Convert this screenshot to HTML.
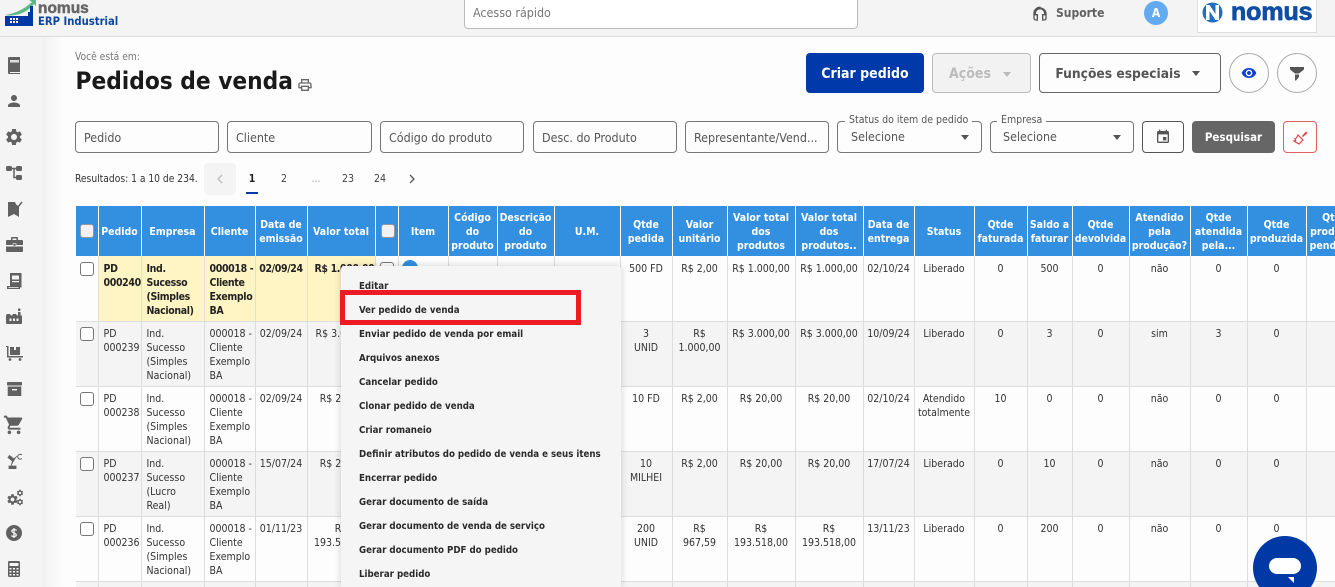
<!DOCTYPE html>
<html lang="pt-BR"><head><meta charset="utf-8"><title>Pedidos de venda</title>
<style>
html,body{margin:0;padding:0;width:1335px;height:587px;overflow:hidden;background:#fdfdfd}
body{position:relative;font-family:"DejaVu Sans Condensed","DejaVu Sans","Liberation Sans",sans-serif;font-size:10.5px;color:#333}
.a{position:absolute;white-space:nowrap}
svg{position:absolute;display:block}
#top{left:0;top:0;width:1335px;height:36px;background:#f4f4f4;border-bottom:1px solid #ddd}
#side{left:0;top:37px;width:42px;height:550px;background:#f4f4f4}
#shade{left:42px;top:37px;width:22px;height:550px;background:linear-gradient(90deg,#f1f1f1,#fdfdfd)}
.btn{position:absolute;box-sizing:border-box;top:53px;height:40px;border-radius:4px;font-weight:bold;font-size:14px;display:flex;align-items:center;justify-content:center;padding-top:1px}
.inp{position:absolute;box-sizing:border-box;top:121px;height:32px;border:1px solid #777;border-radius:4px;background:#fdfdfd;font-size:12.4px;color:#555;line-height:32px;padding-left:8px;white-space:nowrap;overflow:hidden}
.flab{position:absolute;top:114px;background:#fdfdfd;padding:0 4px;font-size:10.5px;color:#555;line-height:13px;white-space:nowrap}
.caret{position:absolute;width:0;height:0;border-left:4px solid transparent;border-right:4px solid transparent;border-top:5px solid #555}
.pg{position:absolute;top:172px;font-size:10.5px;color:#444;width:24px;text-align:center;line-height:14px}
#wrap{left:76px;top:206px;width:1259px;height:381px;overflow:hidden;white-space:normal}
table{border-collapse:separate;border-spacing:0;table-layout:fixed;width:1288px;position:absolute;left:0;top:0}
th{background:#3390e0;color:#fff;font-weight:bold;height:50px;padding:2px 1px 0;box-sizing:border-box;border-right:1px solid #fff;line-height:14px;font-size:10.5px;text-align:center;vertical-align:middle;overflow:hidden;white-space:normal}
td{box-sizing:border-box;height:65px;padding:6px 1px 0;line-height:14px;vertical-align:top;text-align:center;border-right:1px solid #ddd;border-bottom:1px solid #ddd;color:#333;overflow:hidden;background:#fdfdfd;white-space:normal}
tr:not(.s) td:not(.c0){padding-top:5px}
tr.e td{background:#f4f4f4}
tr.s td{height:66px}
tr.s td.y{background:#fff5c4;font-weight:bold;color:#222;letter-spacing:-.35px}
td.l{text-align:left;padding-left:5px;padding-right:0}
.cb{display:block;box-sizing:border-box;width:14px;height:14px;border:1px solid #777;border-radius:3px;background:#fff;margin:0;position:relative;top:5px;left:4px}
tr.s .cb{top:6px}
th .cb{background:#f2f2f2;border-color:#999;top:-1px;margin:0 0 0 3px;left:0}
td.c0{padding:0}
#menu{left:341px;top:266px;width:280px;height:321px;background:#f5f5f5;box-shadow:0 0 8px rgba(0,0,0,.18);border-radius:3px 3px 0 0}
.mi{position:absolute;left:359px;font-weight:bold;font-size:9.65px;color:#2a2a2a;line-height:14px;white-space:nowrap}
#red{left:340px;top:290px;width:241px;height:35px;box-sizing:border-box;border:5px solid #ed1c24}
</style></head><body>

<div class="a" id="top"></div>
<div class="a" id="side"></div>
<div class="a" id="shade"></div>

<!-- Logo left -->
<svg style="left:4px;top:0" width="32" height="28" viewBox="0 0 32 28">
<path d="M1 15 Q16 13 28 2 L25 0 L32 0 L32 6 L30 4 Q20 16 4 15.500Z" fill="#5cb885"/>
<path d="M1 16H24V12L26 12V6H29V16H29V26H1Z" fill="#0039a6"/>
<g fill="#fff"><rect x="6" y="18" width="2" height="2"/><rect x="9" y="18" width="2" height="2"/><rect x="12" y="18" width="2" height="2"/><rect x="6" y="21" width="2" height="2"/><rect x="9" y="21" width="2" height="2"/><rect x="12" y="21" width="2" height="2"/></g>
</svg>
<div class="a" style="left:38px;top:1px;font-family:'Liberation Sans',sans-serif;font-weight:bold;font-size:15.5px;line-height:16px;color:#666;-webkit-text-stroke:.5px #666">nomus</div>
<div class="a" style="left:38px;top:14px;font-weight:bold;font-size:11.2px;line-height:15px;color:#0d47a1">ERP Industrial</div>

<!-- search -->
<div class="a" style="left:464px;top:-2px;width:394px;height:31px;box-sizing:border-box;background:#fff;border:1px solid #bbb;border-radius:0 0 4px 4px;font-size:12.4px;color:#777;line-height:28px;padding-left:8px">Acesso rápido</div>

<!-- support -->
<svg style="left:1032px;top:6px" width="16" height="16" viewBox="0 0 24 24"><path d="M12 2a9 9 0 0 0-9 9v7a3 3 0 0 0 3 3h2v-8H5v-2a7 7 0 0 1 14 0v2h-3v8h2.500a3 3 0 0 0 2.500-2v-7a9 9 0 0 0-9-9z" fill="none" stroke="#555" stroke-width="2"/></svg>
<div class="a" style="left:1056px;top:6px;font-weight:bold;font-size:12px;line-height:15px;color:#616161">Suporte</div>
<div class="a" style="left:1144px;top:1px;width:24px;height:24px;border-radius:50%;background:#64aaf0;color:#fff;font-weight:bold;font-size:12px;line-height:24px;text-align:center">A</div>
<div class="a" style="left:1197px;top:-2px;width:120px;height:35px;box-sizing:border-box;background:#fff;border:1px solid #ddd"></div>
<svg style="left:1202px;top:2px" width="21" height="21" viewBox="0 0 21 21"><circle cx="10.500" cy="10.500" r="10" fill="#1f6fc0"/><path d="M4 18V3h3.500l6 9V3H17v15h-3.500l-6-9v9z" fill="#fff"/></svg>
<div class="a" style="left:1231px;top:-2px;font-family:'Liberation Sans',sans-serif;font-weight:bold;font-size:25px;line-height:28px;color:#0f4ea3;-webkit-text-stroke:.8px #0f4ea3;letter-spacing:-.1px">nomus</div>

<!-- sidebar icons -->
<svg style="left:8px;top:57px" width="13" height="17" viewBox="0 0 13 17"><path d="M1 0h11v15H2a1 1 0 0 0 0 1h10v1H1a1 1 0 0 1-1-1V1a1 1 0 0 1 1-1z" fill="#616161"/><rect x="2" y="3" width="9" height="2.500" fill="#ddd"/></svg>
<svg style="left:5px;top:92px" width="18" height="18" viewBox="0 0 24 24"><path d="M12 12c2.210 0 4-1.790 4-4s-1.790-4-4-4-4 1.790-4 4 1.790 4 4 4zm0 2c-2.670 0-8 1.340-8 4v2h16v-2c0-2.660-5.330-4-8-4z" fill="#616161"/></svg>
<svg style="left:4px;top:127px" width="20" height="20" viewBox="0 0 24 24"><path id="g" d="M19.140 12.940c.04-.3.06-.61.06-.94 0-.32-.02-.64-.07-.94l2.030-1.580c.18-.14.23-.41.12-.61l-1.920-3.320c-.12-.22-.37-.29-.59-.22l-2.390.96c-.5-.38-1.030-.7-1.620-.94l-.36-2.540c-.04-.24-.24-.41-.48-.41h-3.840c-.24 0-.43.17-.47.41l-.36 2.540c-.59.24-1.130.57-1.620.94l-2.390-.96c-.22-.08-.47 0-.59.22L2.740 8.870c-.12.21-.08.47.12.61l2.030 1.580c-.05.3-.09.63-.09.94s.02.64.07.94l-2.030 1.580c-.18.14-.23.41-.12.61l1.920 3.320c.12.22.37.29.59.22l2.390-.96c.5.38 1.030.7 1.620.94l.36 2.540c.05.24.24.41.48.41h3.840c.24 0 .44-.17.47-.41l.36-2.540c.59-.24 1.130-.56 1.620-.94l2.390.96c.22.08.47 0 .59-.22l1.920-3.320c.12-.22.07-.47-.12-.61l-2.010-1.580zM12 15.600c-1.980 0-3.600-1.620-3.600-3.600s1.620-3.600 3.600-3.600 3.600 1.620 3.600 3.600-1.620 3.600-3.600 3.600z" fill="#616161"/></svg>
<svg style="left:6px;top:165px" width="16" height="16" viewBox="0 0 16 16"><g fill="#616161"><rect x="0" y="1" width="6" height="5" rx="1.500"/><rect x="10" y="1" width="6" height="5" rx="1.500"/><rect x="10" y="10" width="6" height="5" rx="1.500"/></g><path d="M5 3.500h6M8 3.500v9h3" stroke="#616161" stroke-width="1.500" fill="none"/></svg>
<svg style="left:8px;top:201px" width="15" height="17" viewBox="0 0 15 17"><path d="M0 1h7l2 5h2v10l-5-3-6 3z" fill="#616161"/><path d="M8 4l2 2 4-5" stroke="#616161" stroke-width="1.500" fill="none"/></svg>
<svg style="left:6px;top:236px" width="17" height="17" viewBox="0 0 17 17"><path d="M5 4V2a1 1 0 0 1 1-1h5a1 1 0 0 1 1 1v2h4a1 1 0 0 1 1 1v4H0V5a1 1 0 0 1 1-1zm1.500 0h4V2.500h-4zM0 10.500h17V15a1 1 0 0 1-1 1H1a1 1 0 0 1-1-1z" fill="#616161"/><rect x="7" y="7.500" width="3" height="2.500" fill="#616161" stroke="#f4f4f4" stroke-width=".6"/></svg>
<svg style="left:7px;top:273px" width="15" height="17" viewBox="0 0 15 17"><path d="M3 0h11.500v14.500H13V16H0v-3h3z" fill="#616161"/><rect x="5" y="2.500" width="7" height="4" fill="#f4f4f4"/><rect x="5" y="8" width="7" height="1.200" fill="#f4f4f4"/><rect x="1.500" y="14" width="10" height=".8" fill="#f4f4f4"/></svg>
<svg style="left:6px;top:308px" width="16" height="17" viewBox="0 0 16 17"><path d="M0 7.500L1 6h3l1 1.500h1L7 6h3l1 1.500h1V4h2.500v3.500H16V15a1 1 0 0 1-1 1H1a1 1 0 0 1-1-1z" fill="#616161"/><circle cx="13.200" cy="1.700" r="1.300" fill="#616161"/><g fill="#f4f4f4"><rect x="3.500" y="10.500" width="2" height="2.500"/><rect x="7" y="10.500" width="2" height="2.500"/><rect x="10.500" y="10.500" width="2" height="2.500"/></g></svg>
<svg style="left:6px;top:345px" width="17" height="16" viewBox="0 0 17 16"><path d="M0 1h2.500v10H17v1.500H1V2H0z" fill="#616161"/><path d="M4 2h4v3h2V2h4v8H4z" fill="#616161"/><circle cx="4" cy="14.500" r="1.400" fill="#616161"/><circle cx="14" cy="14.500" r="1.400" fill="#616161"/></svg>
<svg style="left:7px;top:382px" width="15" height="14" viewBox="0 0 15 14"><rect x="0" y="0" width="15" height="3.500" rx=".8" fill="#616161"/><path d="M.7 4.500h13.600V14H.7z" fill="#616161"/><rect x="5" y="7" width="5" height="1.400" fill="#f4f4f4"/></svg>
<svg style="left:3px;top:414px" width="22" height="22" viewBox="0 0 24 24"><path d="M7 18c-1.100 0-1.990.9-1.990 2S5.900 22 7 22s2-.9 2-2-.9-2-2-2zM1 2v2h2l3.600 7.590-1.350 2.450c-.16.28-.25.61-.25.96 0 1.100.9 2 2 2h12v-2H7.420c-.14 0-.25-.11-.25-.25l.03-.12.9-1.830h7.450c.75 0 1.410-.41 1.750-1.030l3.580-6.490c.08-.14.12-.31.12-.48 0-.55-.45-1-1-1H5.210l-.94-2H1zm16 16c-1.100 0-1.990.9-1.990 2s.89 2 1.990 2 2-.9 2-2-.9-2-2-2z" fill="#616161"/></svg>
<svg style="left:7px;top:453px" width="15" height="16" viewBox="0 0 15 16"><path d="M2 13h7v3H2zM4 13l1.500-5L1 4.500 2.500 2.500 7 6 10 3" fill="#616161" stroke="#616161" stroke-width=".8"/><path d="M15 2a2.500 2.500 0 1 0 0 3.500" stroke="#616161" stroke-width="1" fill="none"/></svg>
<svg style="left:6px;top:493px" width="13" height="13" viewBox="0 0 24 24"><use href="#g"/></svg>
<svg style="left:16px;top:489px" width="8" height="8" viewBox="0 0 24 24"><use href="#g"/></svg>
<svg style="left:16px;top:498px" width="8" height="8" viewBox="0 0 24 24"><use href="#g"/></svg>
<svg style="left:6px;top:525px" width="16" height="16" viewBox="0 0 16 16"><circle cx="8" cy="8" r="8" fill="#616161"/><path d="M10.500 5.500C10 4.500 6 4 5.800 6s4.500 2 4.500 4-4 1.800-4.800.5M8 3v10" fill="none" stroke="#f4f4f4" stroke-width="1.300"/></svg>
<svg style="left:8px;top:561px" width="12" height="16" viewBox="0 0 12 16"><rect width="12" height="16" rx="1.200" fill="#616161"/><rect x="1.500" y="2" width="9" height="3" fill="#f4f4f4"/><g fill="#f4f4f4"><rect x="1.500" y="7" width="2" height="1.500"/><rect x="5" y="7" width="2" height="1.500"/><rect x="8.500" y="7" width="2" height="1.500"/><rect x="1.500" y="10" width="2" height="1.500"/><rect x="5" y="10" width="2" height="1.500"/><rect x="8.500" y="10" width="2" height="1.500"/><rect x="1.500" y="13" width="2" height="1.500"/><rect x="5" y="13" width="2" height="1.500"/><rect x="8.500" y="13" width="2" height="1.500"/></g></svg>

<!-- heading -->
<div class="a" style="left:75px;top:51px;font-size:10.2px;line-height:13px;color:#777">Você está em:</div>
<div class="a" style="left:75.5px;top:64px;font-weight:bold;font-size:24.2px;line-height:34px;color:#1a1a1a">Pedidos de venda</div>
<svg style="left:297px;top:77px" width="16" height="16" viewBox="0 0 24 24"><path d="M19 8h-1V3H6v5H5c-1.660 0-3 1.340-3 3v6h4v4h12v-4h4v-6c0-1.660-1.340-3-3-3zM8 5h8v3H8V5zm8 14H8v-4h8v4zm4-4h-2v-2H6v2H4v-4c0-.55.45-1 1-1h14c.55 0 1 .45 1 1v4z" fill="#666"/></svg>

<!-- top buttons -->
<div class="btn" style="left:806px;width:118px;background:#0039a9;color:#fff">Criar pedido</div>
<div class="btn" style="left:932px;width:99px;background:#f2f2f2;border:1px solid #bbb;color:#bbb"><span style="margin-right:23px">Ações</span></div>
<div class="caret" style="left:1003px;top:72px;border-top-color:#bbb"></div>
<div class="btn" style="left:1039px;width:182px;background:#fdfdfd;border:1px solid #666;color:#555;font-size:13.7px"><span style="margin-right:24px">Funções especiais</span></div>
<div class="caret" style="left:1192px;top:71px"></div>
<div class="btn" style="left:1229px;width:40px;border:1px solid #aaa;border-radius:50%"></div>
<svg style="left:1241px;top:65px" width="16" height="16" viewBox="0 0 24 24"><path d="M12 4.500C7 4.500 2.730 7.610 1 12c1.730 4.390 6 7.500 11 7.500s9.270-3.110 11-7.500c-1.730-4.390-6-7.500-11-7.500zM12 17c-2.760 0-5-2.240-5-5s2.240-5 5-5 5 2.240 5 5-2.240 5-5 5zm0-8c-1.660 0-3 1.340-3 3s1.340 3 3 3 3-1.340 3-3-1.340-3-3-3z" fill="#0a3fd0"/></svg>
<div class="btn" style="left:1277px;width:40px;border:1px solid #aaa;border-radius:50%"></div>
<svg style="left:1290px;top:67px" width="14" height="14" viewBox="0 0 14 14"><path d="M0 0h14v2.500L9 6.500H5L0 2.500zM5 7.500h4V10l-3 3.500H5z" fill="#555"/></svg>

<!-- filters -->
<div class="inp" style="left:75px;width:144px">Pedido</div>
<div class="inp" style="left:227px;width:145px">Cliente</div>
<div class="inp" style="left:380px;width:144px">Código do produto</div>
<div class="inp" style="left:533px;width:144px">Desc. do Produto</div>
<div class="inp" style="left:685px;width:144px">Representante/Vend...</div>
<div class="inp" style="left:837px;width:145px;padding-left:13px;line-height:30px">Selecione</div>
<div class="flab" style="left:845px">Status do item de pedido</div>
<div class="caret" style="left:961px;top:135px"></div>
<div class="inp" style="left:990px;width:144px;padding-left:12px;line-height:30px">Selecione</div>
<div class="flab" style="left:997px">Empresa</div>
<div class="caret" style="left:1113px;top:135px"></div>
<div class="inp" style="left:1142px;width:42px;border-color:#555"></div>
<svg style="left:1155px;top:129px" width="16" height="16" viewBox="0 0 24 24"><path d="M17 12h-5v5h5v-5zM16 1v2H8V1H6v2H5c-1.110 0-1.990.9-1.990 2L3 19c0 1.100.89 2 2 2h14c1.100 0 2-.9 2-2V5c0-1.100-.9-2-2-2h-1V1h-2zm3 18H5V8h14v11z" fill="#555"/></svg>
<div class="a" style="left:1192px;top:121px;width:83px;height:32px;background:#666;border-radius:4px;color:#fff;font-weight:bold;font-size:11.500px;line-height:33px;text-align:center">Pesquisar</div>
<div class="a" style="left:1283px;top:121px;width:34px;height:32px;box-sizing:border-box;border:1px solid #e06060;border-radius:4px"></div>
<svg style="left:1293px;top:130px" width="15" height="15" viewBox="0 0 15 15"><path d="M9 6l4-4.500 1.500 1.500L10 7z" fill="#e04040"/><path d="M5 5l5 5-4 4L1 11c2 0 2-1 1-2 1 0 2-2 3-4z" fill="none" stroke="#e04040" stroke-width="1.200"/></svg>

<!-- pagination -->
<div class="a" style="left:75px;top:173px;font-size:10.2px;line-height:14px;color:#333">Resultados: 1 a 10 de 234.</div>
<div class="a" style="left:204px;top:163px;width:32px;height:32px;background:#f4f4f4;border-radius:4px"></div>
<svg style="left:216px;top:174px" width="8" height="10" viewBox="0 0 8 10"><path d="M6 1L2 5l4 4" fill="none" stroke="#bbb" stroke-width="1.300"/></svg>
<div class="pg" style="left:240px;font-weight:bold;color:#222">1</div>
<div class="a" style="left:246px;top:192px;width:12px;height:2px;background:#0039a9"></div>
<div class="pg" style="left:272px">2</div>
<div class="pg" style="left:304px;color:#aaa">...</div>
<div class="pg" style="left:336px">23</div>
<div class="pg" style="left:368px">24</div>
<svg style="left:408px;top:174px" width="8" height="10" viewBox="0 0 8 10"><path d="M2 1l4 4-4 4" fill="none" stroke="#555" stroke-width="1.300"/></svg>

<!-- table -->
<div class="a" id="wrap">
<table>
<colgroup><col style="width:22.500px"><col style="width:43px"><col style="width:63px"><col style="width:51px"><col style="width:52px"><col style="width:68px"><col style="width:23px"><col style="width:50px"><col style="width:49px"><col style="width:57px"><col style="width:66px"><col style="width:52px"><col style="width:55px"><col style="width:68px"><col style="width:68px"><col style="width:51px"><col style="width:60px"><col style="width:53px"><col style="width:45px"><col style="width:57px"><col style="width:61px"><col style="width:57px"><col style="width:59px"><col style="width:58px"></colgroup>
<tr><th><span class="cb"></span></th><th>Pedido</th><th>Empresa</th><th>Cliente</th><th>Data de emissão</th><th>Valor total</th><th><span class="cb" style="margin-left:4px"></span></th><th>Item</th><th>Código do produto</th><th>Descrição do produto</th><th>U.M.</th><th>Qtde pedida</th><th>Valor unitário</th><th>Valor total dos produtos</th><th>Valor total dos produtos..</th><th>Data de entrega</th><th>Status</th><th>Qtde faturada</th><th>Saldo a faturar</th><th>Qtde devolvida</th><th>Atendido pela produção?</th><th>Qtde atendida pela...</th><th>Qtde produzida</th><th>Qtde produção pendente</th></tr>
<tr class="s"><td class="c0"><span class="cb"></span></td><td class="l y">PD<br>000240</td><td class="l y">Ind.<br>Sucesso<br>(Simples<br>Nacional)</td><td class="l y">000018&nbsp;-<br>Cliente<br>Exemplo<br>BA</td><td class="y">02/09/24</td><td class="y" style="text-align:left;padding-left:7px;white-space:nowrap">R$&nbsp;1.000,00</td><td class="c0"><span class="cb"></span></td><td></td><td></td><td></td><td></td><td>500 FD</td><td>R$ 2,00</td><td>R$ 1.000,00</td><td>R$ 1.000,00</td><td>02/10/24</td><td>Liberado</td><td>0</td><td>500</td><td>0</td><td>não</td><td>0</td><td>0</td><td></td></tr>
<tr class="e"><td class="c0"><span class="cb"></span></td><td class="l">PD<br>000239</td><td class="l">Ind.<br>Sucesso<br>(Simples<br>Nacional)</td><td class="l">000018&nbsp;-<br>Cliente<br>Exemplo<br>BA</td><td>02/09/24</td><td style="text-align:left;padding-left:8px;white-space:nowrap">R$ 3.000,00</td><td class="c0"></td><td></td><td></td><td></td><td></td><td>3<br>UNID</td><td>R$ 1.000,00</td><td>R$ 3.000,00</td><td>R$ 3.000,00</td><td>10/09/24</td><td>Liberado</td><td>0</td><td>3</td><td>0</td><td>sim</td><td>3</td><td>0</td><td></td></tr>
<tr><td class="c0"><span class="cb"></span></td><td class="l">PD<br>000238</td><td class="l">Ind.<br>Sucesso<br>(Simples<br>Nacional)</td><td class="l">000018&nbsp;-<br>Cliente<br>Exemplo<br>BA</td><td>02/09/24</td><td>R$ 20,00</td><td class="c0"></td><td></td><td></td><td></td><td></td><td>10 FD</td><td>R$ 2,00</td><td>R$ 20,00</td><td>R$ 20,00</td><td>02/10/24</td><td>Atendido totalmente</td><td>10</td><td>0</td><td>0</td><td>não</td><td>0</td><td>0</td><td></td></tr>
<tr class="e"><td class="c0"><span class="cb"></span></td><td class="l">PD<br>000237</td><td class="l">Ind.<br>Sucesso<br>(Lucro<br>Real)</td><td class="l">000018&nbsp;-<br>Cliente<br>Exemplo<br>BA</td><td>15/07/24</td><td>R$ 20,00</td><td class="c0"></td><td></td><td></td><td></td><td></td><td>10<br>MILHEI</td><td>R$ 2,00</td><td>R$ 20,00</td><td>R$ 20,00</td><td>17/07/24</td><td>Liberado</td><td>0</td><td>10</td><td>0</td><td>não</td><td>0</td><td>0</td><td></td></tr>
<tr><td class="c0"><span class="cb"></span></td><td class="l">PD<br>000236</td><td class="l">Ind.<br>Sucesso<br>(Simples<br>Nacional)</td><td class="l">000018&nbsp;-<br>Cliente<br>Exemplo<br>BA</td><td>01/11/23</td><td>R$ 193.518,00</td><td class="c0"></td><td></td><td></td><td></td><td></td><td>200<br>UNID</td><td>R$<br>967,59</td><td>R$<br>193.518,00</td><td>R$<br>193.518,00</td><td>13/11/23</td><td>Liberado</td><td>0</td><td>200</td><td>0</td><td>não</td><td>0</td><td>0</td><td></td></tr>
<tr class="e"><td class="c0"></td><td></td><td></td><td></td><td></td><td></td><td></td><td></td><td></td><td></td><td></td><td></td><td></td><td></td><td></td><td></td><td></td><td></td><td></td><td></td><td></td><td></td><td></td><td></td></tr>
</table>
</div>
<div class="a" style="left:402px;top:260px;width:16px;height:16px;border-radius:50%;background:#3390e0"></div>

<!-- menu -->
<div class="a" id="menu"></div>
<div class="mi" style="top:280px">Editar</div>
<div class="mi" style="top:304px">Ver pedido de venda</div>
<div class="mi" style="top:328px">Enviar pedido de venda por email</div>
<div class="mi" style="top:352px">Arquivos anexos</div>
<div class="mi" style="top:376px">Cancelar pedido</div>
<div class="mi" style="top:400px">Clonar pedido de venda</div>
<div class="mi" style="top:424px">Criar romaneio</div>
<div class="mi" style="top:448px">Definir atributos do pedido de venda e seus itens</div>
<div class="mi" style="top:472px">Encerrar pedido</div>
<div class="mi" style="top:496px">Gerar documento de saída</div>
<div class="mi" style="top:520px">Gerar documento de venda de serviço</div>
<div class="mi" style="top:544px">Gerar documento PDF do pedido</div>
<div class="mi" style="top:568px">Liberar pedido</div>
<div class="a" id="red"></div>

<!-- chat -->
<div class="a" style="left:1253px;top:536px;width:64px;height:64px;border-radius:50%;background:#0039a6"></div>
<div class="a" style="left:1269px;top:558px;width:32px;height:16px;border-radius:8px;background:#fff"></div>
<svg style="left:1288px;top:577px" width="7" height="7" viewBox="0 0 7 7"><path d="M0 0h6v6z" fill="#fff"/></svg>
</body></html>
